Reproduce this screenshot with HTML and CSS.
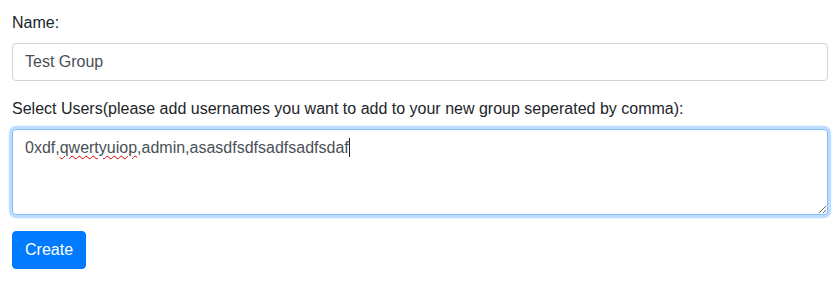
FILE: index.html
```html
<!DOCTYPE html>
<html>
<head>
<meta charset="utf-8">
<link rel="stylesheet" href="styles.css">
</head>
<body>
<form class="page">
  <div class="form-group">
    <label class="label" for="name">Name:</label>
    <input class="control" id="name" type="text" value="Test Group">
  </div>
  <div class="form-group">
    <label class="label">Select Users(please add usernames you want to add to your new group seperated by comma):</label>
    <div class="control area focused">0xdf,<span class="misspelled">qwertyuiop</span>,admin,asasdfsdfsadfsadfsdaf<span class="caret"></span></div>
  </div>
  <button class="btn" type="button">Create</button>
</form>
</body>
</html>
```

FILE: styles.css
```css
html, body {
  margin: 0;
  padding: 0;
  background: #fff;
}
body {
  font-family: "Liberation Sans", Arial, sans-serif;
  font-size: 16px;
  line-height: 24px;
  color: #212529;
}
.page {
  padding: 11px 12px 0 12px;
}
.form-group {
  margin-bottom: 16px;
}
.label {
  display: block;
  margin-bottom: 8px;
}
.control {
  display: block;
  box-sizing: border-box;
  width: 100%;
  height: 38px;
  padding: 6px 12px;
  font-family: inherit;
  font-size: 16px;
  line-height: 24px;
  color: #495057;
  background: #fff;
  border: 1px solid #ced4da;
  border-radius: 4px;
  outline: none;
}
.area {
  height: 86px;
  overflow: auto;
  resize: vertical;
  white-space: pre-wrap;
}
.focused {
  border-color: #80bdff;
  box-shadow: 0 0 0 3.2px rgba(0, 123, 255, 0.25);
}
.misspelled {
  text-decoration: underline wavy #e00000;
  text-decoration-thickness: 1px;
  text-underline-offset: 2px;
}
.caret {
  display: inline-block;
  width: 1px;
  height: 19px;
  background: #212529;
  vertical-align: -4px;
}
.btn {
  display: inline-block;
  height: 38px;
  padding: 6px 12px;
  font-family: inherit;
  font-size: 16px;
  line-height: 24px;
  color: #fff;
  background: #007bff;
  border: 1px solid #007bff;
  border-radius: 4px;
  cursor: pointer;
}
```
